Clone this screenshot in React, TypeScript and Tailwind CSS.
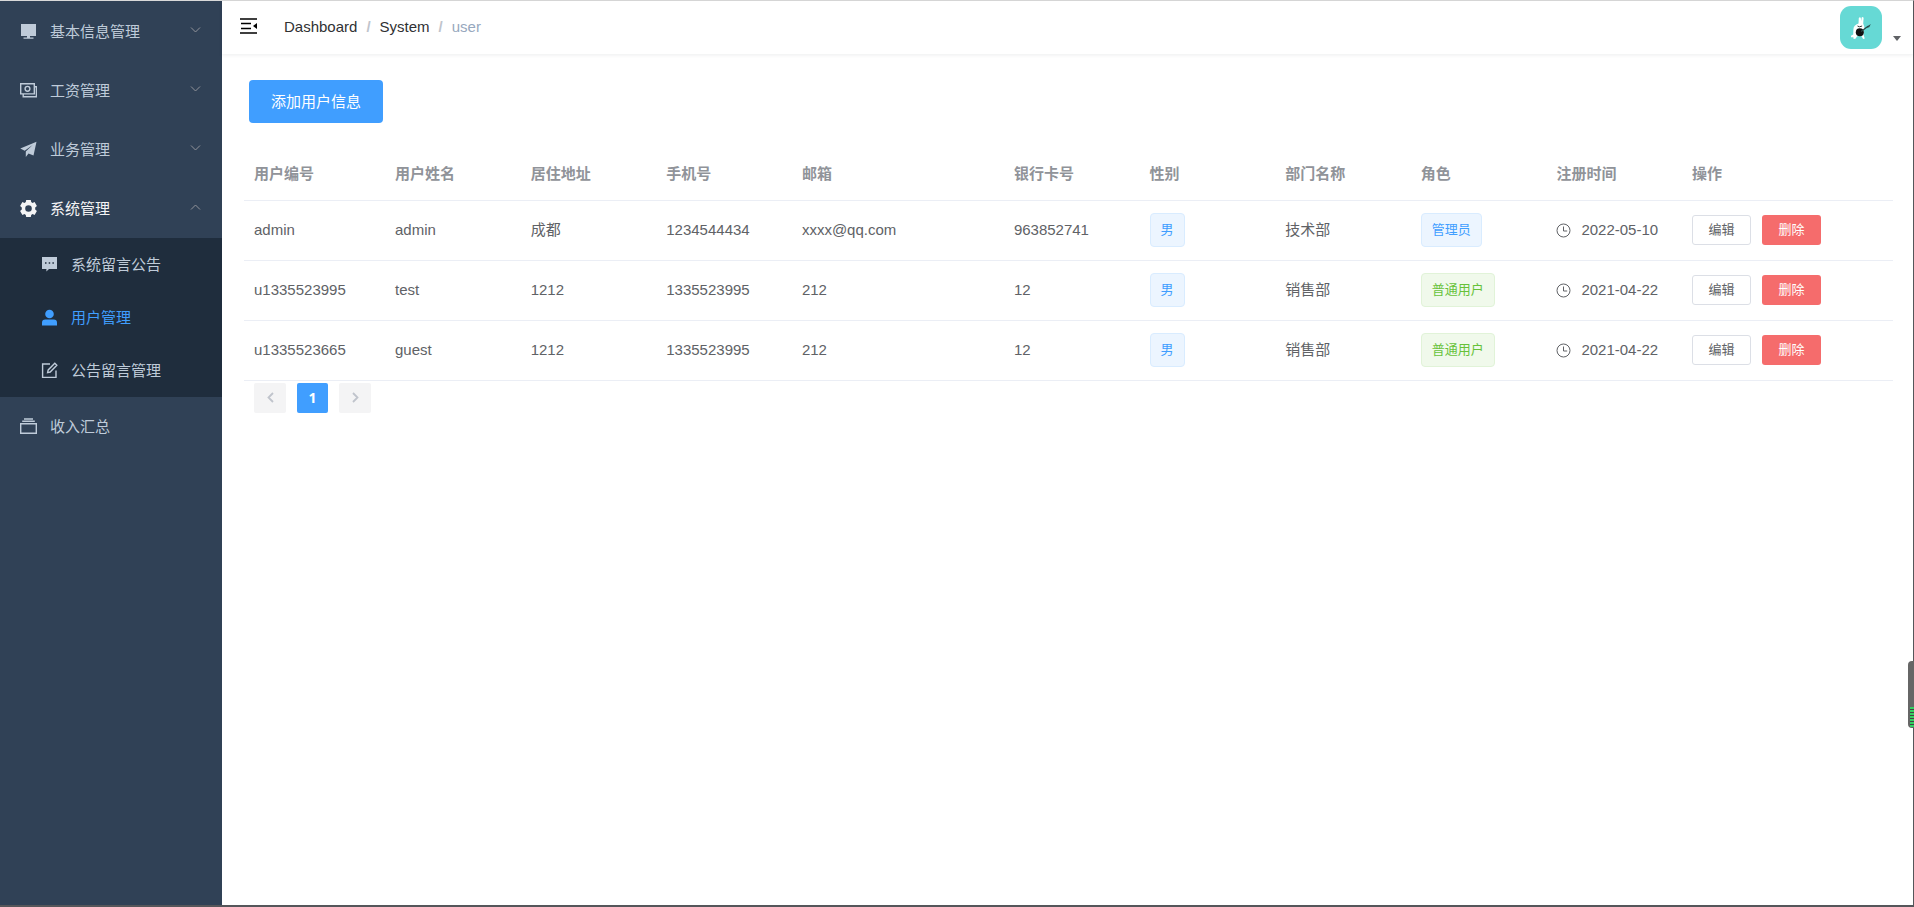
import { useState } from 'react'
import type { ReactNode } from 'react'

const users = [
  { id: 'admin', name: 'admin', address: '成都', phone: '1234544434', email: 'xxxx@qq.com', card: '963852741', gender: '男', dept: '技术部', role: '管理员', date: '2022-05-10' },
  { id: 'u1335523995', name: 'test', address: '1212', phone: '1335523995', email: '212', card: '12', gender: '男', dept: '销售部', role: '普通用户', date: '2021-04-22' },
  { id: 'u1335523665', name: 'guest', address: '1212', phone: '1335523995', email: '212', card: '12', gender: '男', dept: '销售部', role: '普通用户', date: '2021-04-22' },
]

const columns = [
  { label: '用户编号', width: 'w-[141px]' },
  { label: '用户姓名', width: '' },
  { label: '居住地址', width: '' },
  { label: '手机号', width: '' },
  { label: '邮箱', width: 'w-[212px]' },
  { label: '银行卡号', width: '' },
  { label: '性别', width: '' },
  { label: '部门名称', width: '' },
  { label: '角色', width: '' },
  { label: '注册时间', width: '' },
  { label: '操作', width: 'w-[211px]' },
]

function Icon({ children }: { children: ReactNode }) {
  return (
    <svg viewBox="0 0 17 17" className="size-[17px] shrink-0" fill="none" stroke="currentColor" strokeWidth="1.4" aria-hidden="true">
      {children}
    </svg>
  )
}

const MonitorIcon = () => (
  <Icon>
    <path d="M1 1h15v12H1z M7 13h3v1.500H7z M3.500 14.500h10v1.200h-10z" fill="currentColor" stroke="none" />
  </Icon>
)

const MoneyIcon = () => (
  <Icon>
    <path d="M.7 1.700h13.600v10.200H.7z M14.400 4.700h2v10H3.200v-2.600" />
    <circle cx="7.500" cy="6.800" r="2.400" />
  </Icon>
)

const PromotionIcon = () => (
  <Icon>
    <path d="M16.500.8L.3 7.600l4.400 2.200L12.600 4 5.800 10.500V16l2.700-3.600 5 2.200z" fill="currentColor" stroke="none" />
  </Icon>
)

const GearIcon = () => (
  <Icon>
    <path
      d="M6.200 0h4.600l.4 2.100 1.300.8 2.100-.8 2.300 3.900-1.700 1.500v2l1.700 1.500-2.300 3.900-2.100-.8-1.300.8-.4 2.100H6.200l-.4-2.100-1.300-.8-2.100.8L.1 11l1.700-1.500v-2L.1 6l2.300-3.900 2.100.8 1.300-.8z M8.500 5.200a3.300 3.300 0 1 0 0 6.600 3.300 3.300 0 0 0 0-6.600z"
      fill="currentColor"
      fillRule="evenodd"
      stroke="none"
    />
  </Icon>
)

const MessageIcon = () => (
  <Icon>
    <path
      d="M1 1h15v12H8l-2.600 2.500V13H1z M4 6.300v1.400h1.500V6.300z M7.700 6.300v1.400h1.500V6.300z M11.400 6.300v1.400h1.500V6.300z"
      fill="currentColor"
      fillRule="evenodd"
      stroke="none"
    />
  </Icon>
)

const UserIcon = () => (
  <Icon>
    <circle cx="8.500" cy="5" r="4.300" fill="currentColor" stroke="none" />
    <path d="M1 16.500v-2.700a3.300 3.300 0 0 1 3.300-3.300h8.400a3.300 3.300 0 0 1 3.300 3.300v2.700z" fill="currentColor" stroke="none" />
  </Icon>
)

const EditIcon = () => (
  <Icon>
    <path d="M9 2H1.600v13.400H15V8.500 M6.600 10.600l.6-2.700L13.800 1.300l2 2-6.600 6.700z" />
  </Icon>
)

const FilesIcon = () => (
  <Icon>
    <path d="M.7 5.700h15.600v9.600H.7z M2.200 3.300h12.600 M4 1h9" />
  </Icon>
)

function Chevron({ open }: { open?: boolean }) {
  return (
    <svg viewBox="0 0 11 6" className="mb-1 ml-auto h-[6px] w-[11px]" fill="none" stroke="#909399" aria-hidden="true">
      <path d={open ? 'M1 5.500L5.500 1 10 5.500' : 'M1 .5L5.500 5 10 .5'} />
    </svg>
  )
}

const groups = [
  { label: '基本信息管理', icon: <MonitorIcon /> },
  { label: '工资管理', icon: <MoneyIcon /> },
  { label: '业务管理', icon: <PromotionIcon /> },
  { label: '系统管理', icon: <GearIcon />, open: true },
]

const subItems = [
  { label: '系统留言公告', icon: <MessageIcon /> },
  { label: '用户管理', icon: <UserIcon />, active: true },
  { label: '公告留言管理', icon: <EditIcon /> },
]

function Sidebar() {
  return (
    <nav className="w-[222px] shrink-0 bg-[#304156] text-[#bfcbd9]">
      <div className="pt-px">
        {groups.map((group) => (
          <button
            key={group.label}
            type="button"
            aria-expanded={!!group.open}
            className={`flex h-[59px] w-full items-center gap-[13px] pr-[21px] pl-5 ${group.open ? 'text-[#f4f4f5]' : ''}`}
          >
            {group.icon}
            <span>{group.label}</span>
            <Chevron open={group.open} />
          </button>
        ))}
      </div>
      <div className="bg-[#1f2d3d]">
        {subItems.map((item) => (
          <a
            key={item.label}
            href="#"
            className={`flex h-[53px] items-center gap-[13px] pl-[41px] ${item.active ? 'text-[#409eff]' : ''}`}
          >
            {item.icon}
            <span>{item.label}</span>
          </a>
        ))}
      </div>
      <a href="#" className="flex h-[59px] items-center gap-[13px] pl-5">
        <FilesIcon />
        <span>收入汇总</span>
      </a>
    </nav>
  )
}

function Avatar() {
  return (
    <svg viewBox="0 0 42 43" className="h-[43px] w-[42px] rounded-[11px] bg-[#66d9d5]" aria-hidden="true">
      <path d="M18.500 17.500l.3-5.500q1-1.600 2-.2l.4 3.200.5-3.500q1.300-1 1.900.4l-.4 5.600 1.200 3.500-1 3.500.2 4.500 1.200 3.500-1.700.5-1.800-3.200-4.200.4-1.600 2.500-1.900.3-.2-1.800-2.400.1v-1.600l2.200-1.300.2-5.200q.2-4.200 5.100-5.700z" fill="#fff" />
      <path d="M17.500 20l2 .8 2.600-.8" stroke="#333" fill="none" />
      <circle cx="19.800" cy="26.300" r="4" fill="#111" />
      <path d="M21 25.500l7.500-5.500" stroke="#2b4a4a" strokeWidth="1.100" />
      <path d="M25 22l5.800-4-1.600 3.200z" fill="#2b4a4a" />
    </svg>
  )
}

function Header() {
  return (
    <header className="flex h-[53px] shrink-0 items-center pr-3 pl-[18px] shadow-[0_1px_4px_rgba(0,21,41,0.08)]">
      <button type="button" aria-label="Toggle sidebar" className="mb-1">
        <svg viewBox="0 0 17 16" className="h-4 w-[17px]" fill="none" stroke="#000" strokeWidth="1.500">
          <path d="M0 1h17 M1 5.500h10 M1 10.500h10 M0 15h17" />
          <path d="M17 5v6l-4-3z" fill="#000" stroke="none" />
        </svg>
      </button>
      <nav aria-label="Breadcrumb" className="mb-0.5 ml-[27px] flex gap-[9px] text-[#303133]">
        <a href="#">Dashboard</a>
        <span className="font-bold text-[#c0c4cc]">/</span>
        <a href="#">System</a>
        <span className="font-bold text-[#c0c4cc]">/</span>
        <span className="text-[#97a8be]">user</span>
      </nav>
      <button type="button" aria-label="Account menu" className="ml-auto flex items-end gap-[11px]">
        <Avatar />
        <svg viewBox="0 0 8 5" className="mb-2 h-[5px] w-2" fill="#606266" aria-hidden="true">
          <path d="M0 0h8L4 5z" />
        </svg>
      </button>
    </header>
  )
}

function Tag({ text, green }: { text: string; green?: boolean }) {
  return (
    <span
      className={`inline-flex h-[34px] items-center rounded border px-2.5 text-[13px] ${
        green ? 'border-[#e1f3d8] bg-[#f0f9eb] text-[#67c23a]' : 'border-[#d9ecff] bg-[#ecf5ff] text-[#409eff]'
      }`}
    >
      {text}
    </span>
  )
}

function UserTable() {
  return (
    <table className="w-full table-fixed border-collapse text-left">
      <thead>
        <tr className="h-[52px] border-b border-[#ebeef5] text-[#909399]">
          {columns.map((col) => (
            <th key={col.label} scope="col" className={`px-2.5 font-bold ${col.width}`}>
              {col.label}
            </th>
          ))}
        </tr>
      </thead>
      <tbody>
        {users.map((user) => (
          <tr key={user.id} className="h-[60px] border-b border-[#ebeef5]">
            <td className="px-2.5">{user.id}</td>
            <td className="px-2.5">{user.name}</td>
            <td className="px-2.5">{user.address}</td>
            <td className="px-2.5">{user.phone}</td>
            <td className="px-2.5">{user.email}</td>
            <td className="px-2.5">{user.card}</td>
            <td className="px-2.5">
              <div className="flex"><Tag text={user.gender} /></div>
            </td>
            <td className="px-2.5">{user.dept}</td>
            <td className="px-2.5">
              <div className="flex"><Tag text={user.role} green={user.role === '普通用户'} /></div>
            </td>
            <td className="px-2.5">
              <div className="flex items-center gap-2.5 whitespace-nowrap">
                <svg viewBox="0 0 15 15" className="size-[15px] shrink-0" fill="none" stroke="currentColor" aria-hidden="true">
                  <circle cx="7.500" cy="7.500" r="6.500" />
                  <path d="M7.500 3.500V8h3.700" />
                </svg>
                {user.date}
              </div>
            </td>
            <td className="px-2.5">
              <div className="flex gap-[11px] text-[13px]">
                <button type="button" className="h-[30px] w-[59px] rounded-[3px] border border-[#dcdfe6] bg-white">
                  编辑
                </button>
                <button type="button" className="h-[30px] w-[59px] rounded-[3px] bg-[#f56c6c] text-white">
                  删除
                </button>
              </div>
            </td>
          </tr>
        ))}
      </tbody>
    </table>
  )
}

function Pagination() {
  const [page, setPage] = useState(1)

  return (
    <div className="mt-0.5 flex gap-[11px] px-2.5">
      <button type="button" disabled aria-label="Previous page" className="flex h-[30px] w-8 items-center justify-center rounded-[2px] bg-[#f4f4f5]">
        <svg viewBox="0 0 7 11" className="h-[11px] w-[7px]" fill="none" stroke="#c0c4cc" strokeWidth="1.800">
          <path d="M6 1L1.500 5.500 6 10" />
        </svg>
      </button>
      <button
        type="button"
        onClick={() => setPage(1)}
        aria-current="page"
        className="h-[30px] w-[31px] rounded-[2px] bg-[#409eff] font-['Open_Sans',sans-serif] text-sm font-bold text-white"
      >
        {page}
      </button>
      <button type="button" disabled aria-label="Next page" className="flex h-[30px] w-8 items-center justify-center rounded-[2px] bg-[#f4f4f5]">
        <svg viewBox="0 0 7 11" className="h-[11px] w-[7px]" fill="none" stroke="#c0c4cc" strokeWidth="1.800">
          <path d="M1 1l4.500 4.500L1 10" />
        </svg>
      </button>
    </div>
  )
}

export default function App() {
  return (
    <div className="relative flex min-h-screen border-t border-r border-b-2 border-t-[#d9d9d9] border-r-[#55565a] border-b-[#55565a] bg-white font-['Liberation_Sans','Noto_Sans_CJK_SC',sans-serif] text-[15px] leading-5 text-[#606266]">
      <Sidebar />
      <div className="flex min-w-0 grow flex-col">
        <Header />
        <main className="pr-5 pl-[22px]">
          <button type="button" className="mt-[26px] mb-[25px] ml-[5px] block h-[43px] rounded bg-[#409eff] px-[22px] text-white">
            添加用户信息
          </button>
          <UserTable />
          <Pagination />
        </main>
      </div>

      {/* Floating side widget */}
      <div className="absolute top-[660px] -right-px flex h-[67px] w-1.5 flex-col items-end justify-end overflow-hidden rounded-l bg-[#666] pb-px">
        <div className="h-5 w-1 bg-[repeating-linear-gradient(#35d161_0_2px,#444_2px_3px)]" />
      </div>
    </div>
  )
}
